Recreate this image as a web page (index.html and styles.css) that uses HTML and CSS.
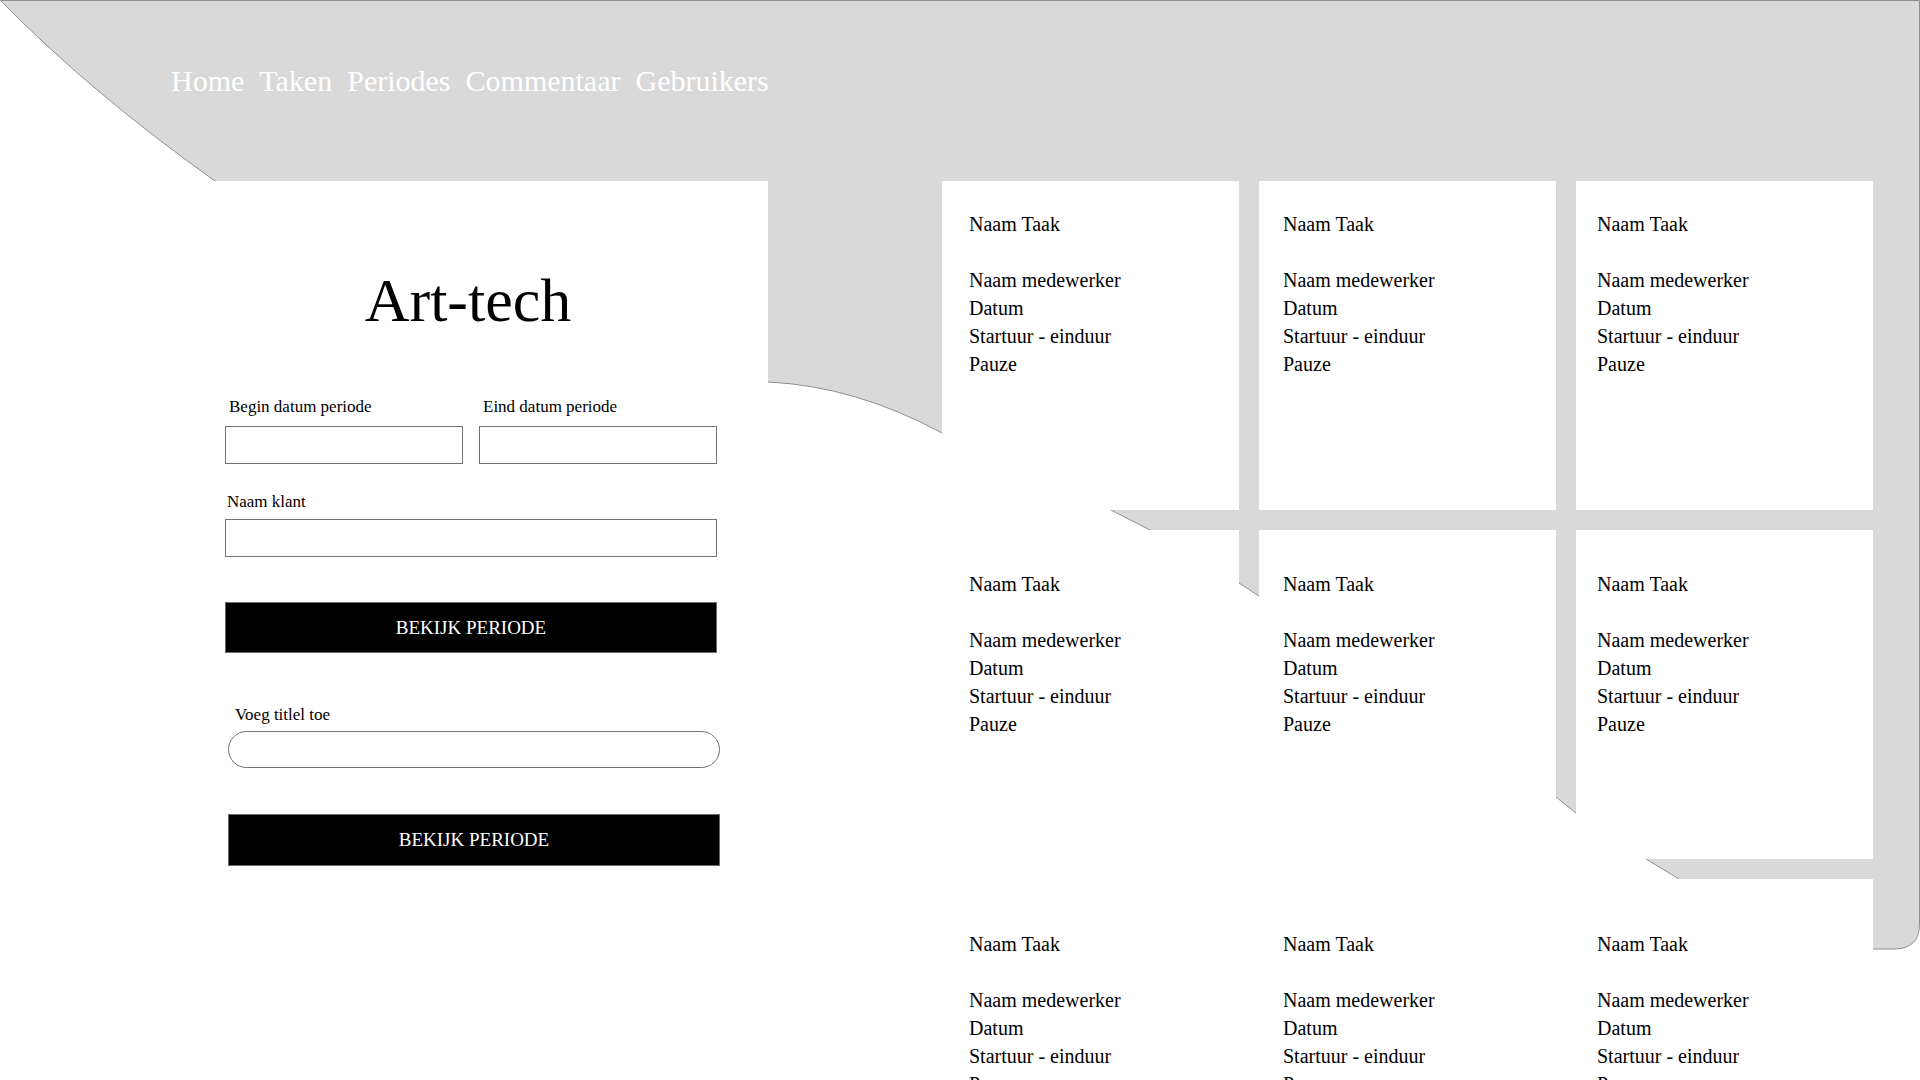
FILE: index.html
```html
<!DOCTYPE html>
<html lang="nl">
<head>
<meta charset="utf-8">
<title>Art-tech – Periodes</title>
<link rel="stylesheet" href="styles.css">
</head>
<body>
  <svg class="backdrop" width="1920" height="1080" viewBox="0 0 1920 1080" aria-hidden="true">
    <path class="backdrop__shape" d="M0.5,0.5 L1919.5,0.5 L1919.5,924 Q1919.5,949 1894,949 L1796,949 L1679,879 L1646,859 L1576,813 L1556,797 L1259,596 L1239,583 L1148,529 L1111,510 L942,433 Q855,386 768,382 L215,181 Q90,92 0.5,0.5 Z"/>
  </svg>

  <header class="topbar">
    <nav class="nav">
      <a class="nav__link" href="#">Home</a>
      <a class="nav__link" href="#">Taken</a>
      <a class="nav__link" href="#">Periodes</a>
      <a class="nav__link" href="#">Commentaar</a>
      <a class="nav__link" href="#">Gebruikers</a>
    </nav>
  </header>

  <main class="layout">
    <section class="form-panel">
      <h1 class="title">Art-tech</h1>

      <div class="field-row">
        <div class="field">
          <label class="field__label" for="begin">Begin datum periode</label>
          <input class="field__input" id="begin" type="text">
        </div>
        <div class="field">
          <label class="field__label" for="eind">Eind datum periode</label>
          <input class="field__input" id="eind" type="text">
        </div>
      </div>

      <div class="field field--klant">
        <label class="field__label field__label--tight" for="klant">Naam klant</label>
        <input class="field__input" id="klant" type="text">
      </div>

      <button class="btn btn--first" type="button">BEKIJK PERIODE</button>

      <div class="second-group">
        <div class="field">
          <label class="field__label field__label--pill" for="titel">Voeg titlel toe</label>
          <input class="field__input field__input--pill" id="titel" type="text">
        </div>
        <button class="btn btn--second" type="button">BEKIJK PERIODE</button>
      </div>
    </section>

    <section class="task-grid">
      <article class="card"><p class="card__name">Naam Taak</p><p>Naam medewerker</p><p>Datum</p><p>Startuur - einduur</p><p>Pauze</p></article>
      <article class="card"><p class="card__name">Naam Taak</p><p>Naam medewerker</p><p>Datum</p><p>Startuur - einduur</p><p>Pauze</p></article>
      <article class="card"><p class="card__name">Naam Taak</p><p>Naam medewerker</p><p>Datum</p><p>Startuur - einduur</p><p>Pauze</p></article>
      <article class="card card--row2"><p class="card__name">Naam Taak</p><p>Naam medewerker</p><p>Datum</p><p>Startuur - einduur</p><p>Pauze</p></article>
      <article class="card card--row2"><p class="card__name">Naam Taak</p><p>Naam medewerker</p><p>Datum</p><p>Startuur - einduur</p><p>Pauze</p></article>
      <article class="card card--row2"><p class="card__name">Naam Taak</p><p>Naam medewerker</p><p>Datum</p><p>Startuur - einduur</p><p>Pauze</p></article>
      <article class="card card--row3"><p class="card__name">Naam Taak</p><p>Naam medewerker</p><p>Datum</p><p>Startuur - einduur</p><p>Pauze</p></article>
      <article class="card card--row3"><p class="card__name">Naam Taak</p><p>Naam medewerker</p><p>Datum</p><p>Startuur - einduur</p><p>Pauze</p></article>
      <article class="card card--row3"><p class="card__name">Naam Taak</p><p>Naam medewerker</p><p>Datum</p><p>Startuur - einduur</p><p>Pauze</p></article>
    </section>
  </main>
</body>
</html>
```

FILE: styles.css
```css
* {
  box-sizing: border-box;
}

html {
  overflow: hidden;
}

body {
  margin: 0;
  position: relative;
  width: 1920px;
  height: 1080px;
  overflow: hidden;
  background: #ffffff;
  color: #000000;
  font-family: "Liberation Serif", "Times New Roman", serif;
}

.backdrop {
  position: absolute;
  top: 0;
  left: 0;
  z-index: 0;
  pointer-events: none;
}

.backdrop__shape {
  fill: #d9d9d9;
  stroke: #8f8f8f;
  stroke-width: 1;
}

.topbar {
  position: relative;
  z-index: 1;
  height: 181px;
  padding: 63px 0 0 171px;
}

.nav {
  display: flex;
  gap: 15px;
}

.nav__link {
  font-size: 30px;
  line-height: 36px;
  color: #ffffff;
  text-decoration: none;
}

.layout {
  position: relative;
  z-index: 1;
  display: flex;
  align-items: stretch;
  padding-left: 214px;
}

.form-panel {
  width: 554px;
  flex: none;
  background: #ffffff;
  padding: 88px 0 0 11px;
}

.title {
  width: 486px;
  margin: 0 0 66px;
  font-size: 62px;
  line-height: 62px;
  font-weight: normal;
  text-align: center;
}

.field-row {
  display: flex;
  gap: 16px;
  width: 492px;
}

.field {
  display: flex;
  flex-direction: column;
  flex: 1;
}

.field__label {
  font-size: 17px;
  line-height: 20px;
  padding-left: 4px;
  margin-bottom: 9px;
}

.field__label--tight {
  padding-left: 2px;
  margin-bottom: 7px;
}

.field__label--pill {
  padding-left: 7px;
  margin-bottom: 6px;
}

.field__input {
  display: block;
  width: 100%;
  height: 38px;
  margin: 0;
  padding: 0 10px;
  border: 1px solid #727272;
  border-radius: 0;
  background: #ffffff;
  font-family: inherit;
  font-size: 17px;
}

.field__input--pill {
  height: 37px;
  border-radius: 19px;
}

.field--klant {
  width: 492px;
  margin-top: 28px;
}

.btn {
  display: block;
  width: 492px;
  margin: 0;
  padding: 0;
  border: 1px solid #6b6b6b;
  background: #000000;
  color: #ffffff;
  font-family: inherit;
  font-size: 19px;
  text-align: center;
}

.btn--first {
  height: 51px;
  margin-top: 45px;
}

.second-group {
  width: 492px;
  margin: 52px 0 0 3px;
}

.btn--second {
  height: 52px;
  margin-top: 46px;
}

.task-grid {
  margin-left: 174px;
  display: grid;
  grid-template-columns: repeat(3, 297px);
  grid-auto-rows: 329px;
  column-gap: 20px;
  row-gap: 20px;
  align-content: start;
}

.card {
  background: #ffffff;
  padding: 29px 0 0 24px;
  font-size: 20px;
  line-height: 28px;
}

.card:nth-child(3n+1) {
  padding-left: 27px;
}

.card:nth-child(3n) {
  padding-left: 21px;
}

.card p {
  margin: 0;
}

.card .card__name {
  margin-bottom: 28px;
}

.card--row2 {
  padding-top: 40px;
}

.card--row3 {
  padding-top: 51px;
}
```
